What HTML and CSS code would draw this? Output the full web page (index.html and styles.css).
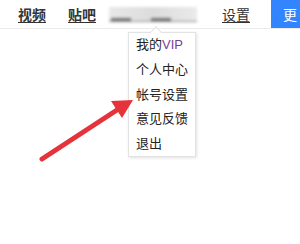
FILE: index.html
```html
<!DOCTYPE html>
<html lang="zh">
<head>
<meta charset="utf-8">
<link rel="stylesheet" href="styles.css">
</head>
<body>
<div class="page">
  <header class="topbar">
    <a class="tab bold">视频</a>
    <a class="tab bold">贴吧</a>
    <div class="blurred"><span class="u1"></span><span class="u2"></span></div>
    <a class="tab set">设置</a>
    <div class="more">更</div>
  </header>
  <div class="menu">
    <div class="item">我的<span class="vip">VIP</span></div>
    <div class="item">个人中心</div>
    <div class="item">帐号设置</div>
    <div class="item">意见反馈</div>
    <div class="item">退出</div>
  </div>
  <svg class="arrow" width="300" height="244" viewBox="0 0 300 244">
    <line x1="42" y1="159" x2="120" y2="108" stroke="#e5323b" stroke-width="5" stroke-linecap="round"/>
    <polygon points="133,100 111,101 122,118" fill="#e5323b"/>
  </svg>
</div>
</body>
</html>
```
FILE: styles.css
```css
html, body { margin: 0; padding: 0; background: #fff; }
.page {
  position: relative;
  width: 300px;
  height: 244px;
  overflow: hidden;
  font-family: "Noto Sans CJK SC", sans-serif;
}
.topbar {
  display: flex;
  align-items: center;
  height: 28px;
  border-bottom: 1px solid #ebebeb;
  padding-left: 18px;
}
.tab {
  font-size: 14px;
  color: #333;
  text-decoration: underline;
  text-underline-offset: 2px;
  line-height: 28px;
}
.tab.bold { font-weight: bold; margin-right: 22px; }
.blurred {
  position: relative;
  width: 88px;
  height: 14px;
  margin-left: -9px;
  background: linear-gradient(90deg, #e8e8e8, #dcdcdc 50%, #eaeaea);
  filter: blur(1.5px);
  border-bottom: 1px solid #888;
}
.blurred .u1, .blurred .u2 {
  position: absolute;
  bottom: 0;
  height: 3px;
  background: #777;
}
.blurred .u1 { left: 2px; width: 20px; }
.blurred .u2 { left: 42px; width: 20px; }
.tab.set { margin-left: 25px; font-weight: normal; }
.more {
  margin-left: auto;
  width: 29px;
  height: 28px;
  background: #3385ff;
  color: #fff;
  font-size: 14px;
  line-height: 28px;
  padding-left: 12px;
  box-sizing: border-box;
  align-self: flex-start;
}
.menu {
  position: absolute;
  left: 128px;
  top: 32px;
  width: 68px;
  height: 125px;
  box-sizing: border-box;
  border: 1px solid #e3e3e3;
  background: #fff;
  box-shadow: 1px 1px 3px rgba(0,0,0,0.12);
  padding-top: 0;
}
.menu::before {
  content: "";
  position: absolute;
  left: 23px;
  top: -5px;
  width: 7px;
  height: 7px;
  background: #fff;
  border-left: 1px solid #e3e3e3;
  border-top: 1px solid #e3e3e3;
  transform: rotate(45deg);
}
.item {
  font-size: 13px;
  line-height: 24.4px;
  padding-left: 7px;
  color: #222;
  margin-top: -1px;
}
.item + .item { margin-top: 0; }
.vip { color: #7a3d95; font-family: "Liberation Sans", sans-serif; }
.arrow {
  position: absolute;
  left: 0;
  top: 0;
}
```
